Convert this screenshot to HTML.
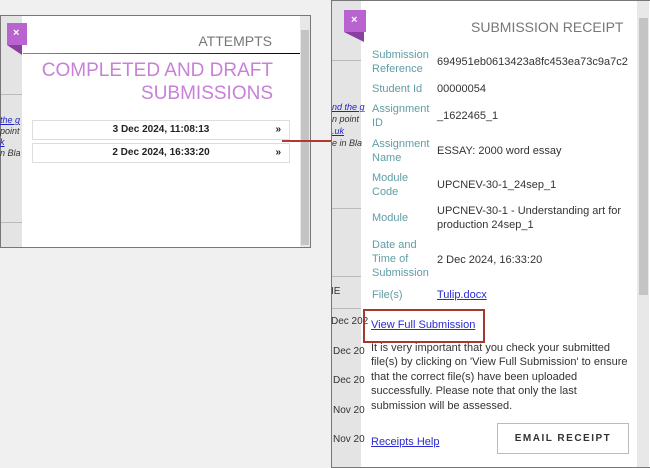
<!DOCTYPE html>
<html><head><style>
body{margin:0;width:650px;height:467px;background:#f0f0f0;position:relative;overflow:hidden;font-family:"Liberation Sans",sans-serif}
.a{position:absolute}
.t{position:absolute;white-space:nowrap}
.lab{color:#5f9ea5;font-size:11px;line-height:14px}
.val{color:#333;font-size:11px;line-height:14px}
a{color:#2a2ad0;text-decoration:underline}
.gi{font-style:italic;font-size:9px;color:#333}
</style></head><body>
<!-- left panel -->
<div class="a" style="left:0;top:15px;width:309px;height:231px;border:1px solid #777;background:#fff"></div>
<div class="a" style="left:1px;top:16px;width:21px;height:231px;background:#e4e4e4"></div>
<div class="a" style="left:1px;top:94px;width:21px;height:1px;background:#bbb"></div>
<div class="a" style="left:1px;top:222px;width:21px;height:1px;background:#bbb"></div>
<div class="t gi" style="left:0;top:115px;color:#22c"><u>the g</u></div>
<div class="t gi" style="left:0;top:126px">point</div>
<div class="t gi" style="left:0;top:137px;color:#22c"><u>k</u></div>
<div class="t gi" style="left:0;top:148px">n Bla</div>
<div class="a" style="left:300px;top:16px;width:10px;height:231px;background:#e8e8e8"></div>
<div class="a" style="left:301px;top:30px;width:8px;height:215px;background:#c4c4c4"></div>
<div class="a" style="left:7px;top:23px;width:20px;height:22px;background:#b863d0"></div>
<div class="a" style="left:7px;top:45px;width:0;height:0;border-left:15px solid transparent;border-top:10px solid #8a3ea0"></div>
<div class="t" style="left:13px;top:27px;color:#fff;font-size:11px;font-weight:bold">×</div>
<div class="t" style="right:378px;top:33px;color:#777;font-size:14px">ATTEMPTS</div>
<div class="a" style="left:23px;top:53px;width:277px;height:1px;background:linear-gradient(90deg,#b863d0,#000)"></div>
<div class="t" style="right:377px;top:59px;color:#c781d8;font-size:19px;text-align:right;line-height:23px">COMPLETED AND DRAFT<br>SUBMISSIONS</div>
<div class="a" style="left:32px;top:120px;width:256px;height:18px;border:1px solid #ddd;font-size:10px;font-weight:bold;line-height:18px;text-align:center;color:#222">3 Dec 2024, 11:08:13<span style="position:absolute;right:8px">»</span></div>
<div class="a" style="left:32px;top:143px;width:256px;height:18px;border:1px solid #ddd;font-size:10px;font-weight:bold;line-height:18px;text-align:center;color:#222">2 Dec 2024, 16:33:20<span style="position:absolute;right:8px">»</span></div>
<!-- arrow -->
<div class="a" style="left:282px;top:140px;width:96px;height:2px;background:#b03a2e"></div>
<div class="a" style="left:376px;top:137px;width:0;height:0;border-left:8px solid #b03a2e;border-top:4px solid transparent;border-bottom:4px solid transparent"></div>
<!-- right panel -->
<div class="a" style="left:331px;top:0;width:318px;height:466px;border:1px solid #777;background:#fff"></div>
<div class="a" style="left:332px;top:1px;width:29px;height:466px;background:#e4e4e4"></div>
<div class="a" style="left:332px;top:60px;width:29px;height:1px;background:#bbb"></div>
<div class="a" style="left:332px;top:208px;width:29px;height:1px;background:#bbb"></div>
<div class="a" style="left:332px;top:276px;width:29px;height:1px;background:#bbb"></div>
<div class="a" style="left:332px;top:308px;width:29px;height:1px;background:#bbb"></div>
<div class="t gi" style="left:332px;top:102px;color:#22c"><u>nd the g</u></div>
<div class="t gi" style="left:332px;top:114px">n point</div>
<div class="t gi" style="left:332px;top:126px;color:#22c"><u>.uk</u></div>
<div class="t gi" style="left:332px;top:138px">e in Bla</div>
<div class="t" style="left:331px;top:286px;font-size:10px;color:#333">IE</div>
<div class="t" style="left:331px;top:316px;font-size:10px;color:#333">Dec 202</div>
<div class="t" style="left:333px;top:346px;font-size:10px;color:#333">Dec 20</div>
<div class="t" style="left:333px;top:375px;font-size:10px;color:#333">Dec 20</div>
<div class="t" style="left:333px;top:405px;font-size:10px;color:#333">Nov 20</div>
<div class="t" style="left:333px;top:434px;font-size:10px;color:#333">Nov 20</div>
<div class="a" style="left:637px;top:1px;width:12px;height:466px;background:#e8e8e8"></div>
<div class="a" style="left:639px;top:18px;width:9px;height:277px;background:#c4c4c4"></div>
<div class="a" style="left:344px;top:10px;width:22px;height:22px;background:#b863d0"></div>
<div class="a" style="left:344px;top:32px;width:0;height:0;border-left:20px solid transparent;border-top:10px solid #8a3ea0"></div>
<div class="t" style="left:351px;top:14px;color:#fff;font-size:11px;font-weight:bold">×</div>
<div class="t" style="left:471px;top:19px;color:#777;font-size:14px">SUBMISSION RECEIPT</div>
<div class="t lab" style="left:372px;top:48px">Submission<br>Reference</div>
<div class="t val" style="left:437px;top:55px">694951eb0613423a8fc453ea73c9a7c2</div>
<div class="t lab" style="left:372px;top:82px">Student Id</div>
<div class="t val" style="left:437px;top:82px">00000054</div>
<div class="t lab" style="left:372px;top:102px">Assignment<br>ID</div>
<div class="t val" style="left:437px;top:109px">_1622465_1</div>
<div class="t lab" style="left:372px;top:137px">Assignment<br>Name</div>
<div class="t val" style="left:437px;top:144px">ESSAY: 2000 word essay</div>
<div class="t lab" style="left:372px;top:171px">Module<br>Code</div>
<div class="t val" style="left:437px;top:178px">UPCNEV-30-1_24sep_1</div>
<div class="t lab" style="left:372px;top:211px">Module</div>
<div class="t val" style="left:437px;top:204px">UPCNEV-30-1 - Understanding art for<br>production 24sep_1</div>
<div class="t lab" style="left:372px;top:238px">Date and<br>Time of<br>Submission</div>
<div class="t val" style="left:437px;top:253px">2 Dec 2024, 16:33:20</div>
<div class="t lab" style="left:372px;top:288px">File(s)</div>
<div class="t val" style="left:437px;top:288px"><a>Tulip.docx</a></div>
<div class="t val" style="left:371px;top:318px"><a>View Full Submission</a></div>
<div class="a" style="left:363px;top:309px;width:118px;height:30px;border:2px solid #a33a2e"></div>
<div class="t val" style="left:371px;top:341px;line-height:14.4px">It is very important that you check your submitted<br>file(s) by clicking on 'View Full Submission' to ensure<br>that the correct file(s) have been uploaded<br>successfully. Please note that only the last<br>submission will be assessed.</div>
<div class="t val" style="left:371px;top:435px"><a>Receipts Help</a></div>
<div class="a" style="left:497px;top:423px;width:130px;height:29px;border:1px solid #bbb;font-size:10px;font-weight:bold;letter-spacing:1.5px;color:#333;line-height:29px;text-align:center">EMAIL RECEIPT</div>
</body></html>
